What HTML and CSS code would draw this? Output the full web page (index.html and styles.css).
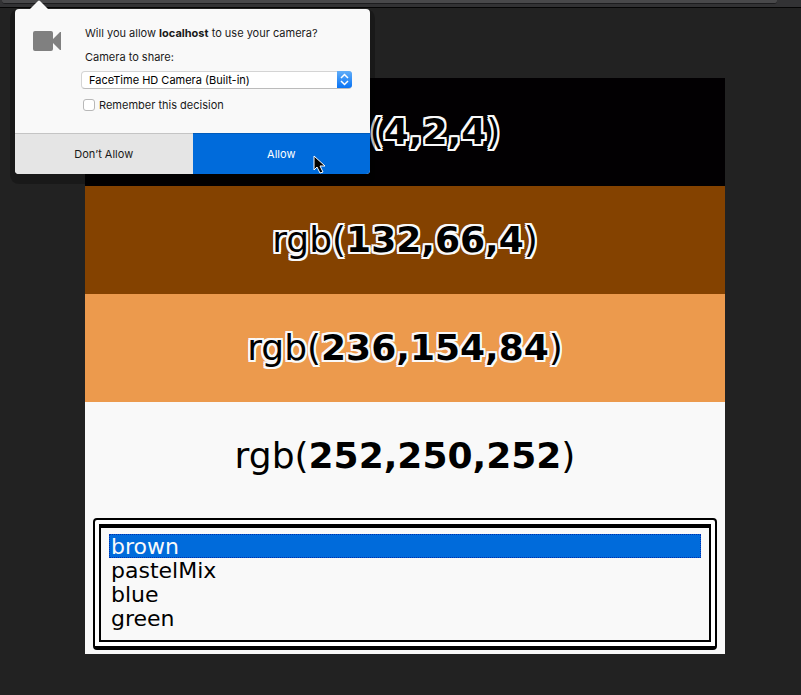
FILE: index.html
```html
<!DOCTYPE html>
<html lang="en">
<head>
<meta charset="utf-8">
<title>Palette</title>
<link rel="stylesheet" href="styles.css">
</head>
<body>
<header class="toolbar"><div class="toolbar-field"></div></header>
<main class="stage">
  <section class="panel">
    <div class="swatch swatch-black"><p class="code">rgb(<b>4,2,4</b>)</p></div>
    <div class="swatch swatch-brown"><p class="code">rgb(<b>132,66,4</b>)</p></div>
    <div class="swatch swatch-orange"><p class="code">rgb(<b>236,154,84</b>)</p></div>
    <div class="swatch swatch-white"><p class="code">rgb(<b>252,250,252</b>)</p></div>
    <div class="frame">
      <select class="palettes" size="4" aria-label="Palette">
        <option selected>brown</option>
        <option>pastelMix</option>
        <option>blue</option>
        <option>green</option>
      </select>
    </div>
  </section>
</main>
<form class="prompt">
  <svg class="arrow" width="18" height="9" viewBox="0 0 18 9" aria-hidden="true"><path d="M0 9 8 1Q9 0 10 1L18 9Z" fill="#f9f9f9"/></svg>
  <div class="prompt-body">
    <svg class="camera" width="28" height="20" viewBox="0 0 28 20" aria-hidden="true"><path d="M2 0H18Q20 0 20 2V8L27 1H28V19H27L20 12V18Q20 20 18 20H2Q0 20 0 18V2Q0 0 2 0Z" fill="#808080"/></svg>
    <div class="prompt-fields">
      <p class="question">Will you allow <b>localhost</b> to use your camera?</p>
      <label class="device-label" for="device">Camera to share:</label>
      <div class="device">
        <select id="device"><option>FaceTime HD Camera (Built-in)</option></select>
        <svg class="stepper" width="15" height="17" viewBox="0 0 15 17" aria-hidden="true">
          <defs><linearGradient id="blue" x2="0" y2="1"><stop stop-color="#62aef8"/><stop offset="1" stop-color="#0873f5"/></linearGradient></defs>
          <path d="M0 0H12Q15 0 15 3V14Q15 17 12 17H0Z" fill="url(#blue)"/>
          <path d="M4 7 7.500 3.500 11 7M4 10 7.500 13.500 11 10" fill="none" stroke="#fff" stroke-width="1.500"/>
        </svg>
      </div>
      <label class="remember"><input type="checkbox">Remember this decision</label>
    </div>
  </div>
  <div class="actions">
    <button type="button" class="deny">Don’t Allow</button>
    <button type="button" class="allow">Allow</button>
  </div>
  <svg class="cursor" width="13" height="19" viewBox="0 0 13 19" aria-hidden="true"><path d="M1 1V15L4 12 7 18 10 17 7 11H12Z" fill="#000" stroke="#fff" stroke-width="1"/></svg>
</form>
</body>
</html>
```
FILE: styles.css
```css
* {
  box-sizing: border-box;
}

body {
  margin: 0;
  min-height: 100vh;
  background: #222;
  color: #1a1a1a;
  font-family: Inter, "Liberation Sans", sans-serif;
  font-size: 11px;
}

p {
  margin: 0;
}

.toolbar {
  height: 8px;
  padding: 0 24px 0 2px;
  background: #323234;
  border-bottom: 1px solid #050505;
}

.toolbar-field {
  height: 4px;
  background: #48484a;
  border-bottom: 1px solid #1c1c1e;
  border-radius: 0 0 3px 3px;
}

.stage {
  padding: 70px 76px 40px 85px;
}

.panel {
  padding-bottom: 4px;
  background: #f9f9f9;
}

.swatch {
  display: flex;
  align-items: center;
  justify-content: center;
  height: 108px;
}

.swatch-black {
  background: #020002;
}

.swatch-brown {
  background: #844200;
}

.swatch-orange {
  background: #ec9a4d;
}

.code {
  color: #000;
  font-family: "DejaVu Sans", sans-serif;
  font-size: 36px;
  line-height: 40px;
  text-shadow: 2px 0 #f9f9f9, -2px 0 #f9f9f9, 0 2px #f9f9f9, 0 -2px #f9f9f9,
    2px 2px #f9f9f9, -2px 2px #f9f9f9, 2px -2px #f9f9f9, -2px -2px #f9f9f9;
}

.frame {
  margin: 8px 8px 0;
  padding: 4px;
  background: #fff;
  border: 2px solid #000;
  border-bottom-width: 4px;
  border-radius: 4px;
}

.palettes {
  display: block;
  width: 100%;
  height: 118px;
  padding: 6px 8px;
  overflow: hidden;
  background: #f9f9f9;
  border: 2px solid #000;
  border-top-width: 4px;
  border-radius: 0;
  outline: none;
  color: #000;
  font-family: "DejaVu Sans", sans-serif;
  font-size: 22px;
}

.palettes option {
  height: 24px;
  min-height: 24px;
  padding: 0 2px;
  line-height: 24px;
}

.palettes option:checked {
  background: #006bdb linear-gradient(#006bdb, #006bdb);
  color: #f9f9f9;
  outline: 1px dotted #0030b0;
  outline-offset: -1px;
}

.prompt {
  position: absolute;
  top: 9px;
  left: 15px;
  width: 355px;
  background: #f9f9f9;
  border-radius: 4px;
  box-shadow: 0 5px 0 5px rgba(0, 0, 0, 0.25);
}

.arrow {
  position: absolute;
  top: -9px;
  left: 15px;
}

.prompt-body {
  display: flex;
  gap: 20px;
  height: 124px;
  padding: 16px 18px;
}

.camera {
  flex: none;
  margin-top: 6px;
}

.prompt-fields {
  flex: 1;
}

.question,
.device-label {
  display: block;
  margin-left: 4px;
  line-height: 16px;
}

.device-label {
  margin-top: 8px;
}

.device {
  position: relative;
  margin-top: 6px;
}

.device select {
  display: block;
  width: 100%;
  height: 18px;
  padding: 0 20px 0 7px;
  appearance: none;
  background: #fff;
  border: 1px solid #d4d4d4;
  border-bottom-color: #bbb;
  border-radius: 4px;
  color: #000;
  font: inherit;
}

.stepper {
  position: absolute;
  top: 0;
  right: 0;
}

.remember {
  display: flex;
  align-items: center;
  gap: 4px;
  margin: 8px 0 0 2px;
  line-height: 16px;
}

.remember input {
  width: 12px;
  height: 12px;
  margin: 0;
  appearance: none;
  background: #fff;
  border: 1px solid #b8b8b8;
  border-radius: 3px;
}

.actions {
  display: grid;
  grid-template-columns: 1fr 1fr;
  height: 41px;
}

.actions button {
  padding: 0;
  border: 0;
  font: inherit;
}

.actions .deny {
  background: #e5e5e5;
  border-top: 1px solid #c4c4c4;
  border-radius: 0 0 0 4px;
  color: #1a1a1a;
}

.actions .allow {
  background: #006bdb;
  border-top: 1px solid #005bbb;
  border-radius: 0 0 4px 0;
  color: #fff;
}

.cursor {
  position: absolute;
  top: 146px;
  left: 298px;
}
```
